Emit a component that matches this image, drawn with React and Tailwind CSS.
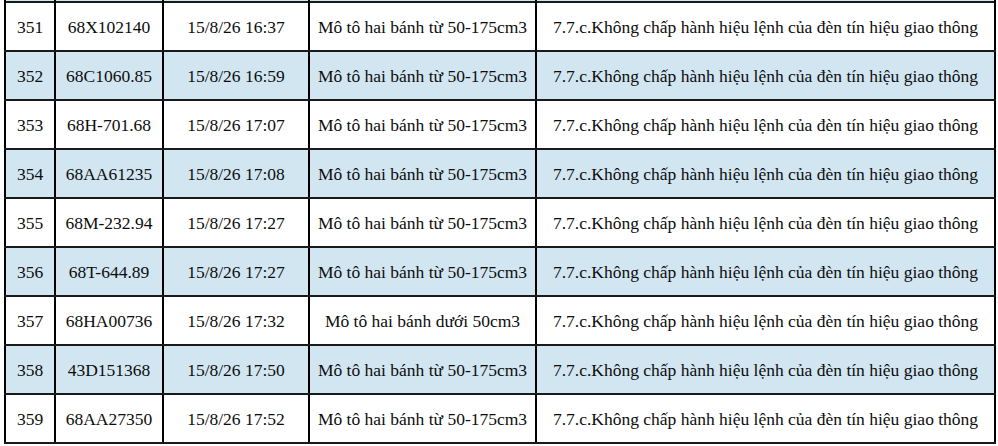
import React from 'react';

const rows = [
  ['351', '68X102140', '15/8/26 16:37', 'Mô tô hai bánh từ 50-175cm3'],
  ['352', '68C1060.85', '15/8/26 16:59', 'Mô tô hai bánh từ 50-175cm3'],
  ['353', '68H-701.68', '15/8/26 17:07', 'Mô tô hai bánh từ 50-175cm3'],
  ['354', '68AA61235', '15/8/26 17:08', 'Mô tô hai bánh từ 50-175cm3'],
  ['355', '68M-232.94', '15/8/26 17:27', 'Mô tô hai bánh từ 50-175cm3'],
  ['356', '68T-644.89', '15/8/26 17:27', 'Mô tô hai bánh từ 50-175cm3'],
  ['357', '68HA00736', '15/8/26 17:32', 'Mô tô hai bánh dưới 50cm3'],
  ['358', '43D151368', '15/8/26 17:50', 'Mô tô hai bánh từ 50-175cm3'],
  ['359', '68AA27350', '15/8/26 17:52', 'Mô tô hai bánh từ 50-175cm3'],
];

const violation = '7.7.c.Không chấp hành hiệu lệnh của đèn tín hiệu giao thông';

export default function App() {
  return (
    <div
      className="w-[998px] h-[446px] bg-white overflow-hidden pl-[4px] text-[17.5px] text-[#0d0d0d]"
      style={{ fontFamily: '"Liberation Serif", "Times New Roman", serif' }}
    >
      <table className="border-collapse table-fixed w-[990px]">
        <colgroup>
          <col className="w-[50px]" />
          <col className="w-[108px]" />
          <col className="w-[146px]" />
          <col className="w-[227px]" />
          <col className="w-[459px]" />
        </colgroup>
        <tbody>
          {/* tail of the previous row, cut off at the top */}
          <tr className="h-[2px] bg-[#d2e6f2]">
            <td className="border-x-2 border-black p-0" />
            <td className="border-x-2 border-black p-0" />
            <td className="border-x-2 border-black p-0" />
            <td className="border-x-2 border-black p-0" />
            <td className="border-x-2 border-black p-0" />
          </tr>
          {rows.map((r, i) => (
            <tr key={r[0]} className={`h-[49px] ${i % 2 === 1 ? 'bg-[#d2e6f2]' : 'bg-white'}`}>
              {[...r, violation].map((c, j) => (
                <td
                  key={j}
                  className="border-2 border-[#1a1a1a] border-x-black text-center align-middle p-0 pt-[2px] whitespace-nowrap"
                >
                  {c}
                </td>
              ))}
            </tr>
          ))}
        </tbody>
      </table>
    </div>
  );
}
